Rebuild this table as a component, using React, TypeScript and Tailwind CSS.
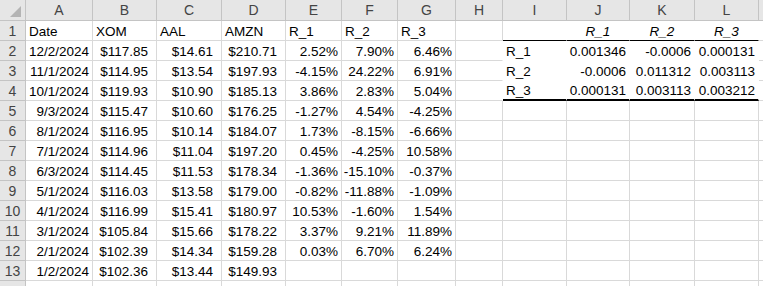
import React from "react";

const colWidths = [26, 67, 64, 65, 64, 56, 56, 58, 47, 64, 63, 65, 64, 20];
// last column (M) is only a sliver, its letter is off screen
const letters = ["A", "B", "C", "D", "E", "F", "G", "H", "I", "J", "K", "L", ""];

type Row = string[];

// columns A..L
const rows: Row[] = [
  ["Date", "XOM", "AAL", "AMZN", "R_1", "R_2", "R_3", "", "", "R_1", "R_2", "R_3"],
  ["12/2/2024", "$117.85", "$14.61", "$210.71", "2.52%", "7.90%", "6.46%", "", "R_1", "0.001346", "-0.0006", "0.000131"],
  ["11/1/2024", "$114.95", "$13.54", "$197.93", "-4.15%", "24.22%", "6.91%", "", "R_2", "-0.0006", "0.011312", "0.003113"],
  ["10/1/2024", "$119.93", "$10.90", "$185.13", "3.86%", "2.83%", "5.04%", "", "R_3", "0.000131", "0.003113", "0.003212"],
  ["9/3/2024", "$115.47", "$10.60", "$176.25", "-1.27%", "4.54%", "-4.25%", "", "", "", "", ""],
  ["8/1/2024", "$116.95", "$10.14", "$184.07", "1.73%", "-8.15%", "-6.66%", "", "", "", "", ""],
  ["7/1/2024", "$114.96", "$11.04", "$197.20", "0.45%", "-4.25%", "10.58%", "", "", "", "", ""],
  ["6/3/2024", "$114.45", "$11.53", "$178.34", "-1.36%", "-15.10%", "-0.37%", "", "", "", "", ""],
  ["5/1/2024", "$116.03", "$13.58", "$179.00", "-0.82%", "-11.88%", "-1.09%", "", "", "", "", ""],
  ["4/1/2024", "$116.99", "$15.41", "$180.97", "10.53%", "-1.60%", "1.54%", "", "", "", "", ""],
  ["3/1/2024", "$105.84", "$15.66", "$178.22", "3.37%", "9.21%", "11.89%", "", "", "", "", ""],
  ["2/1/2024", "$102.39", "$14.34", "$159.28", "0.03%", "6.70%", "6.24%", "", "", "", "", ""],
  ["1/2/2024", "$102.36", "$13.44", "$149.93", "", "", "", "", "", "", "", ""],
  ["", "", "", "", "", "", "", "", "", "", "", ""],
];

function cellClass(r: number, c: number) {
  // r: 1-based sheet row, c: 0-based column index (A=0)
  const inMatrix = r <= 4 && c >= 8 && c <= 11;
  const parts = ["flex items-center overflow-hidden whitespace-nowrap bg-white pt-[2px] text-black"];

  if (inMatrix) {
    if (r === 1) parts.push("border-b border-b-black");
    else if (r === 4) parts.push("border-b-2 border-b-black");
    else parts.push("border-b border-b-white");
    parts.push("border-r border-r-white");
  } else if (c === 7 && r >= 2 && r <= 4) {
    parts.push("border-b border-b-[#d9d9d9] border-r border-r-white");
  } else {
    parts.push("border-b border-r border-[#d9d9d9]");
  }

  if (r === 1) {
    if (c >= 9) parts.push("justify-center italic");
    else parts.push("justify-start pl-[3px]");
  } else if (c === 8) {
    parts.push("justify-start pl-[3px]");
  } else if (c >= 1 && c <= 3) {
    parts.push("justify-end pr-[8px]");
  } else {
    parts.push("justify-end pr-[3px]");
  }
  return parts.join(" ");
}

export default function App() {
  return (
    <div
      className="grid h-[286px] w-[763px] overflow-hidden bg-white text-[13.5px] leading-none"
      style={{
        gridTemplateColumns: colWidths.map((w) => `${w}px`).join(" "),
        gridTemplateRows: "21px repeat(14, 20px)",
        fontFamily: '"Liberation Sans", Arial, sans-serif',
      }}
    >
      {/* corner */}
      <div className="relative border-b border-r border-[#c4c4c4] bg-[#e6e6e6]">
        <div className="absolute bottom-[3px] right-[4px] h-0 w-0 border-b-[11px] border-l-[11px] border-b-[#b4b4b4] border-l-transparent" />
      </div>
      {letters.map((l, i) => (
        <div
          key={i}
          className="flex items-center justify-center border-b border-r border-[#c4c4c4] bg-[#e6e6e6] text-[14px] text-[#444]"
        >
          {l}
        </div>
      ))}

      {rows.map((row, i) => {
        const r = i + 1;
        return (
          <React.Fragment key={r}>
            <div className="flex items-center justify-center border-b border-r border-[#c4c4c4] bg-[#e6e6e6] text-[14px] text-[#444]">
              {r < 14 ? r : ""}
            </div>
            {row.map((v, c) => (
              <div key={c} className={cellClass(r, c)}>
                {v}
              </div>
            ))}
            <div className="border-b border-r border-[#d9d9d9] bg-white" />
          </React.Fragment>
        );
      })}
    </div>
  );
}
